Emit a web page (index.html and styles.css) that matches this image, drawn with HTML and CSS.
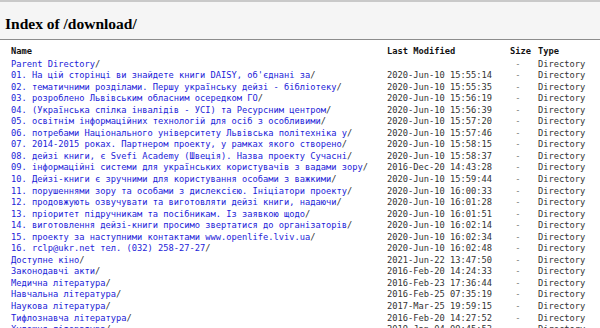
FILE: index.html
```html
<!DOCTYPE html>
<html lang="uk">
<head>
    <meta charset="UTF-8">
    <title>Index of /download/</title>
    <link rel="stylesheet" href="styles.css">
</head>
<body>

<h2>Index of /download/</h2>

<div class="list">
    <table>
        <thead>
            <tr>
                <th class="n">Name</th>
                <th class="m">Last Modified</th>
                <th class="s">Size</th>
                <th class="t">Type</th>
            </tr>
        </thead>
        <tbody>
            <tr><td class="n"><a href="#">Parent Directory</a>/</td><td class="m">&nbsp;</td><td class="s">- &nbsp;</td><td class="t">Directory</td></tr>
            <tr><td class="n"><a href="#">01. На цій сторінці ви знайдете книги DAISY, об'єднані за</a>/</td><td class="m">2020-Jun-10 15:55:14</td><td class="s">- &nbsp;</td><td class="t">Directory</td></tr>
            <tr><td class="n"><a href="#">02. тематичними розділами. Першу українську дейзі - бібліотеку</a>/</td><td class="m">2020-Jun-10 15:55:35</td><td class="s">- &nbsp;</td><td class="t">Directory</td></tr>
            <tr><td class="n"><a href="#">03. розроблено Львівським обласним осередком ГО</a>/</td><td class="m">2020-Jun-10 15:56:19</td><td class="s">- &nbsp;</td><td class="t">Directory</td></tr>
            <tr><td class="n"><a href="#">04. (Українська спілка інвалідів - УСІ) та Ресурсним центром</a>/</td><td class="m">2020-Jun-10 15:56:39</td><td class="s">- &nbsp;</td><td class="t">Directory</td></tr>
            <tr><td class="n"><a href="#">05. освітнім інформаційних технологій для осіб з особливими</a>/</td><td class="m">2020-Jun-10 15:57:20</td><td class="s">- &nbsp;</td><td class="t">Directory</td></tr>
            <tr><td class="n"><a href="#">06. потребами Національного університету Львівська політехніка у</a>/</td><td class="m">2020-Jun-10 15:57:46</td><td class="s">- &nbsp;</td><td class="t">Directory</td></tr>
            <tr><td class="n"><a href="#">07. 2014-2015 роках. Партнером проекту, у рамках якого створено</a>/</td><td class="m">2020-Jun-10 15:58:15</td><td class="s">- &nbsp;</td><td class="t">Directory</td></tr>
            <tr><td class="n"><a href="#">08. дейзі книги, є Svefi Academy (Швеція). Назва проекту Сучасні</a>/</td><td class="m">2020-Jun-10 15:58:37</td><td class="s">- &nbsp;</td><td class="t">Directory</td></tr>
            <tr><td class="n"><a href="#">09. інформаційні системи для українських користувачів з вадами зору</a>/</td><td class="m">2016-Dec-20 14:43:28</td><td class="s">- &nbsp;</td><td class="t">Directory</td></tr>
            <tr><td class="n"><a href="#">10. Дейзі-книги є зручними для користування особами з важкими</a>/</td><td class="m">2020-Jun-10 15:59:44</td><td class="s">- &nbsp;</td><td class="t">Directory</td></tr>
            <tr><td class="n"><a href="#">11. порушеннями зору та особами з дислексією. Ініціатори проекту</a>/</td><td class="m">2020-Jun-10 16:00:33</td><td class="s">- &nbsp;</td><td class="t">Directory</td></tr>
            <tr><td class="n"><a href="#">12. продовжують озвучувати та виготовляти дейзі книги, надаючи</a>/</td><td class="m">2020-Jun-10 16:01:28</td><td class="s">- &nbsp;</td><td class="t">Directory</td></tr>
            <tr><td class="n"><a href="#">13. пріоритет підручникам та посібникам. Із заявкою щодо</a>/</td><td class="m">2020-Jun-10 16:01:51</td><td class="s">- &nbsp;</td><td class="t">Directory</td></tr>
            <tr><td class="n"><a href="#">14. виготовлення дейзі-книги просимо звертатися до організаторів</a>/</td><td class="m">2020-Jun-10 16:02:14</td><td class="s">- &nbsp;</td><td class="t">Directory</td></tr>
            <tr><td class="n"><a href="#">15. проекту за наступними контактами www.openlife.lviv.ua</a>/</td><td class="m">2020-Jun-10 16:02:34</td><td class="s">- &nbsp;</td><td class="t">Directory</td></tr>
            <tr><td class="n"><a href="#">16. rclp@ukr.net тел. (032) 258-27-27</a>/</td><td class="m">2020-Jun-10 16:02:48</td><td class="s">- &nbsp;</td><td class="t">Directory</td></tr>
            <tr><td class="n"><a href="#">Доступне кіно</a>/</td><td class="m">2021-Jun-22 13:47:50</td><td class="s">- &nbsp;</td><td class="t">Directory</td></tr>
            <tr><td class="n"><a href="#">Законодавчі акти</a>/</td><td class="m">2016-Feb-20 14:24:33</td><td class="s">- &nbsp;</td><td class="t">Directory</td></tr>
            <tr><td class="n"><a href="#">Медична література</a>/</td><td class="m">2016-Feb-23 17:36:44</td><td class="s">- &nbsp;</td><td class="t">Directory</td></tr>
            <tr><td class="n"><a href="#">Навчальна література</a>/</td><td class="m">2016-Feb-25 07:35:19</td><td class="s">- &nbsp;</td><td class="t">Directory</td></tr>
            <tr><td class="n"><a href="#">Наукова література</a>/</td><td class="m">2017-Mar-25 19:59:15</td><td class="s">- &nbsp;</td><td class="t">Directory</td></tr>
            <tr><td class="n"><a href="#">Тифлознавча література</a>/</td><td class="m">2016-Feb-20 14:27:52</td><td class="s">- &nbsp;</td><td class="t">Directory</td></tr>
            <tr><td class="n"><a href="#">Художня література</a>/</td><td class="m">2019-Jan-04 09:45:53</td><td class="s">- &nbsp;</td><td class="t">Directory</td></tr>
        </tbody>
    </table>
</div>

</body>
</html>
```

FILE: styles.css
```css
body {
    margin: 0;
    background-color: #f5f5f5;
    border-top: 2px solid #c9c9c9;
}
h2 {
    font-family: "Liberation Serif", serif;
    font-size: 15.5px;
    line-height: 18px;
    font-weight: bold;
    color: #000;
    margin: 13px 0 6px 5px;
}
a, a:active {
    text-decoration: none;
    color: #1c1cd8;
}
a:hover {
    text-decoration: underline;
    color: red;
}
.list {
    background-color: white;
    border-top: 1px solid #8c8c8c;
    padding-top: 6px;
    padding-bottom: 14px;
}
table {
    margin-left: 11px;
    border-collapse: collapse;
}
th, td {
    font-family: "DejaVu Sans Mono", monospace;
    font-size: 8.72px;
    line-height: 11.55px;
    text-align: left;
    padding: 0;
    white-space: pre;
    color: #333;
}
th {
    font-weight: bold;
    color: #111;
    padding-bottom: 1px;
}
.n {
    width: 376px;
}
.m {
    width: 123px;
}
.s {
    width: 21px;
    padding-right: 7px;
    text-align: right;
}
td.s {
    color: #777;
}
```
